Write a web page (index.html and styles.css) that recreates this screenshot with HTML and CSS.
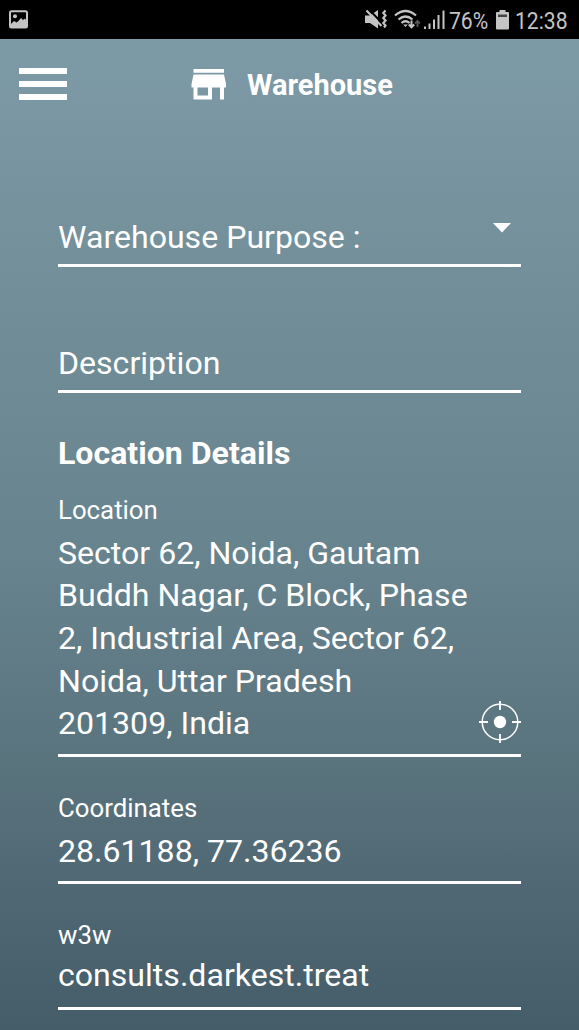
FILE: index.html
```html
<!DOCTYPE html>
<html lang="en">
<head>
<meta charset="utf-8">
<title>Warehouse</title>
<link rel="stylesheet" href="styles.css">
</head>
<body>
<div class="status">
  <svg class="status-photo" width="20" height="20" viewBox="0 0 20 20"><rect x="1" y="1.3" width="17" height="16.2" rx="1.5" fill="none" stroke="#c4c4c4" stroke-width="2"/><circle cx="6" cy="6.3" r="2" fill="#c4c4c4"/><path d="M1 14.500l2-1.500 2-2 2.500 1.500 1.500-1 3-3.500 2 2 2 -1.500 2 3V18H1z" fill="#c4c4c4"/></svg>
  <svg class="status-icons" width="84" height="38" viewBox="0 0 84 38">
    <path d="M1 15.500h5l8-5.500v18.500l-8-5.500H1z" fill="#c4c4c4"/>
    <path d="M5 9.500l13 13.500" stroke="#000" stroke-width="2"/><path d="M2.500 10.500l15 15.500" stroke="#c4c4c4" stroke-width="2.200"/>
    <path d="M21.500 10.500l-2.200 2.500 2.200 2.500-2.200 2.500 2.200 2.500-2.200 2.500 2.200 2.500-1.500 2" fill="none" stroke="#c4c4c4" stroke-width="2.200"/>
    <g fill="none" stroke="#c4c4c4" stroke-width="2.300"><path d="M31 15.500q10.500-9 21 0M34.500 19.500q7-6 14 0M37.500 23q4-3.500 8 0"/></g>
    <path d="M39.200 24.500h4.600L41.500 27z" fill="#c4c4c4"/>
    <path d="M47.500 20.500v7M44.800 24.500l2.700 2.800 2.700-2.800" fill="none" stroke="#c4c4c4" stroke-width="2"/>
    <path d="M53.500 27v-6M51 23.500l2.500-2.700 2.500 2.700" fill="none" stroke="#555" stroke-width="1.800"/>
    <g fill="#c4c4c4"><path d="M60 26.500h2v2.500h-2zM64.500 23.500h2v5.500h-2zM69 19.500h2v9.500h-2zM73.500 15h2v14h-2zM78.500 10.500h2v18.500h-2z"/></g>
  </svg>
  <span class="status-text percent">76%</span>
  <svg class="battery" width="13" height="20" viewBox="0 0 13 20"><path d="M3.500 0h6v2H12q1 0 1 1v15.500q0 1-1 1H1q-1 0-1-1V3q0-1 1-1h2.500z" fill="#c4c4c4"/><path d="M2 4.500h9V7H2z" fill="#444"/></svg>
  <span class="status-text clock">12:38</span>
</div>
<header class="header">
  <div class="menu"><i></i><i></i><i></i></div>
  <svg class="store" width="36" height="32" viewBox="0 0 36 32"><path fill="#fff" fill-rule="evenodd" d="M2.500 0h30.500v3.800H2.500zM2.500 5.500h30.500l2 9.500v3.500h-2V30.500h-4V18.500h-8V30.500H2.500V18.500h-2V15zM6.500 18.500v8h10.500v-8z"/></svg>
  <h1>Warehouse</h1>
</header>
<main>
  <div class="field purpose"><span>Warehouse Purpose :</span><svg width="18" height="10" viewBox="0 0 18 10"><path d="M0 0h18L9 9.500z" fill="#fff"/></svg></div>
  <div class="field description">Description</div>
  <h2>Location Details</h2>
  <label>Location</label>
  <div class="field location"><div>Sector 62, Noida, Gautam<br>Buddh Nagar, C Block, Phase<br>2, Industrial Area, Sector 62,<br>Noida, Uttar Pradesh<br>201309, India</div>
    <svg width="42" height="42" viewBox="0 0 42 42" fill="none" stroke="#fff"><circle cx="21" cy="21" r="17.800" stroke-width="1.500"/><circle cx="21" cy="21" r="6.200" fill="#fff" stroke="none"/><path d="M21 0v9M21 33v9M0 21h9M33 21h9" stroke-width="1.800"/></svg>
  </div>
  <label class="gap">Coordinates</label>
  <div class="field coordinates">28.61188, 77.36236</div>
  <label class="gap">w3w</label>
  <div class="field words">consults.darkest.treat</div>
</main>
</body>
</html>
```
FILE: styles.css
```css
* { box-sizing: border-box; }
body {
  margin: 0;
  height: 1030px;
  overflow: hidden;
  color: #fff;
  font-family: Roboto, "Liberation Sans", sans-serif;
  background: linear-gradient(#7d9aa7 39px, #728e98 300px, #67838d 560px, #59737d 770px, #526a75 860px, #445d68 1030px);
}
svg { display: block; flex: none; }
.status { height: 39px; background: #000; display: flex; align-items: flex-start; color: #c4c4c4; }
.status-photo { margin: 10px 0 0 9px; }
.status-icons { margin-left: 335px; }
.status-text { font-size: 24px; line-height: 42px; transform: scaleX(.88); transform-origin: left; white-space: nowrap; }
.percent { width: 47px; margin-left: 1px; }
.battery { margin-top: 10px; }
.clock { margin-left: 6px; }
.header { height: 91px; display: flex; align-items: flex-start; }
.menu { width: 48px; margin: 29px 0 0 19px; display: grid; gap: 7.500px; }
.menu i { height: 5.500px; background: #fff; }
.store { margin: 30px 0 0 124px; }
h1 { margin: 27px 0 0 20px; font-size: 29px; line-height: 38px; font-weight: 700; }
main { padding: 0 58px; }
.field { border-bottom: 3px solid #fff; font-size: 32.100px; line-height: 42.640px; display: flex; justify-content: space-between; white-space: nowrap; }
.purpose { height: 137px; padding-top: 86px; }
.purpose svg { margin: 7px 10px 0 0; }
.description { height: 126px; padding-top: 75px; }
h2 { margin: 39px 0 0; font-size: 32.100px; line-height: 42px; font-weight: 700; }
label { display: block; font-size: 25.800px; line-height: 34px; margin-top: 19px; }
.location { height: 230px; padding-top: 4.600px; }
.location svg { margin-top: 169.400px; }
.gap { margin-top: 34px; }
.coordinates { height: 59px; padding-top: 5px; }
.words { height: 58px; padding-top: 2px; }
```
